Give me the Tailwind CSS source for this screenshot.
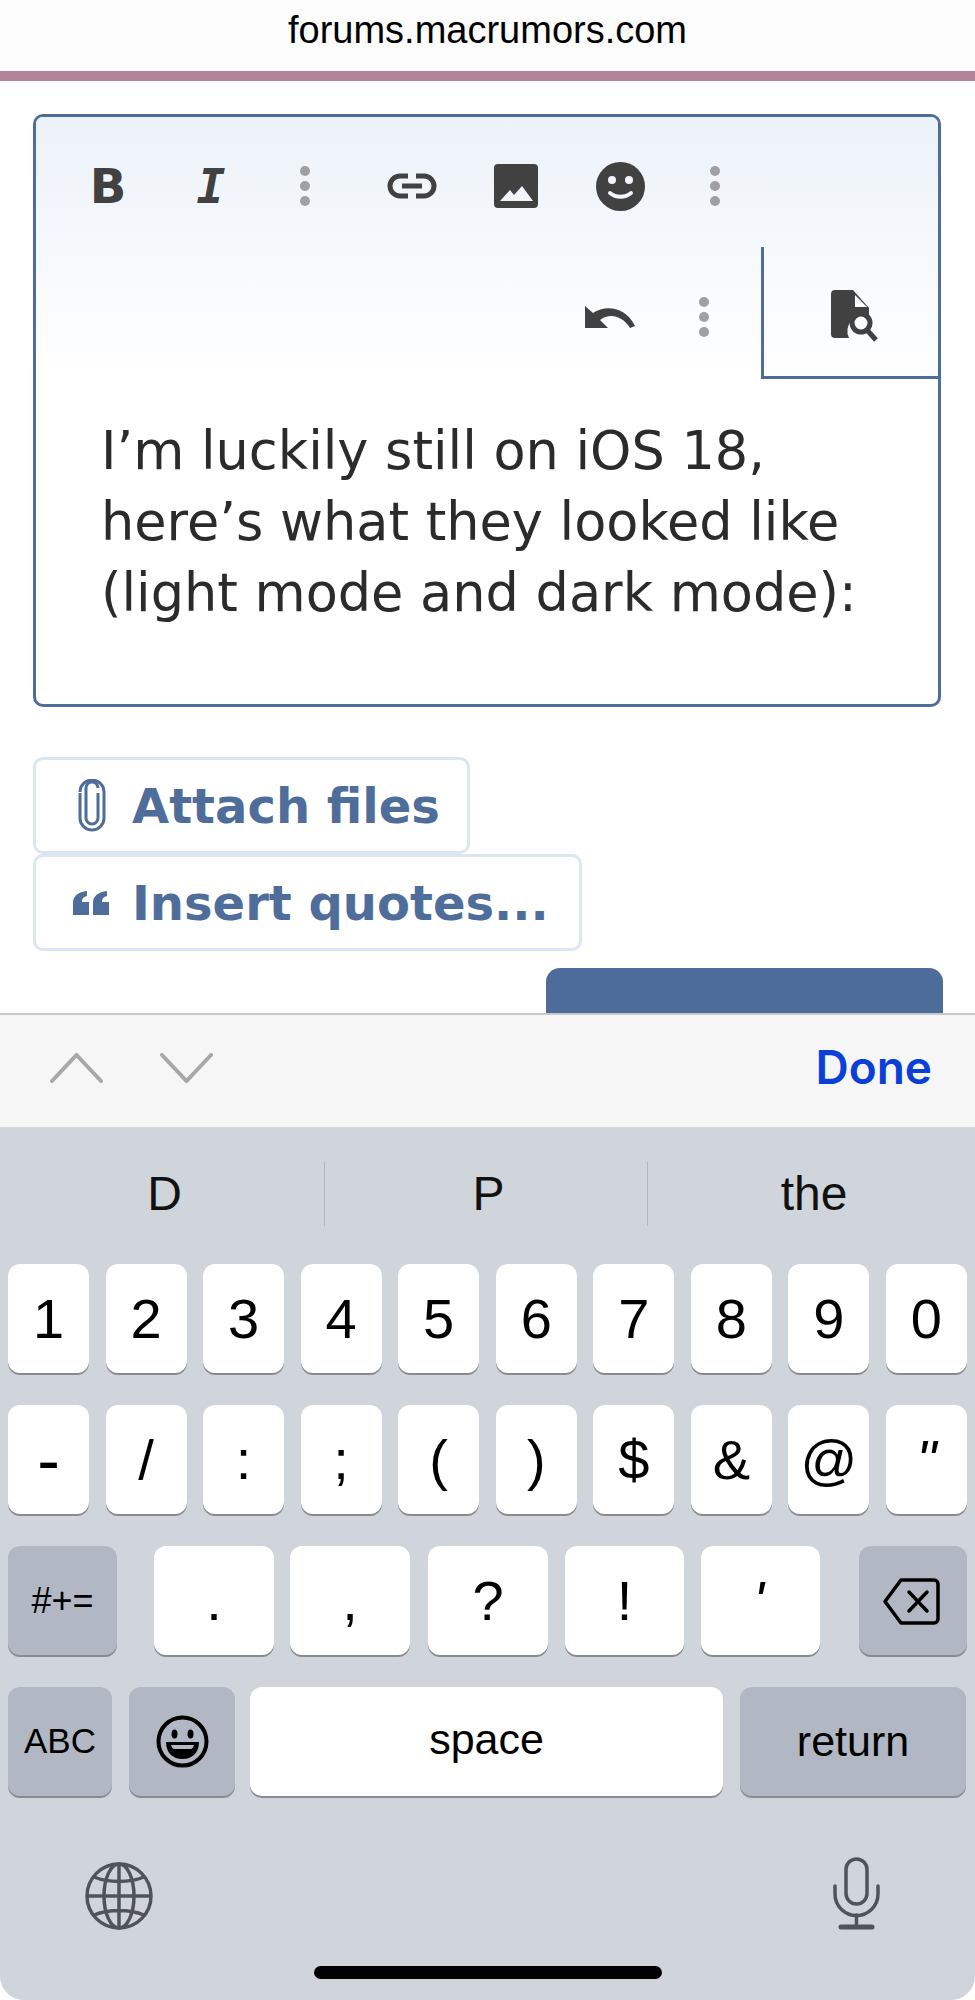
<!DOCTYPE html>
<html lang="en">
<head>
<meta charset="utf-8" />
<title>forums.macrumors.com</title>
<script src="https://cdn.jsdelivr.net/npm/@tailwindcss/browser@4"></script>
</head>
<body class="w-[975px] h-[2000px] overflow-hidden bg-white font-['Liberation_Sans',sans-serif] text-black">

  <!-- safari address bar -->
  <header class="h-[71px] bg-[#fcfcfc] flex items-center justify-center text-[38px] pb-[10px]">forums.macrumors.com</header>
  <div class="h-[10px] bg-[#b38499]"></div>

  <main class="h-[932px] px-[33px] pt-[33px] overflow-hidden flex flex-col items-start">
    <div class="w-[908px] h-[593px] shrink-0 rounded-[10px] border-[3px] border-[#4f6d9a] overflow-hidden">
      <div class="h-[262px] bg-gradient-to-b from-[#ecf2f9] to-[#ffffff]">
        <div class="h-[130px] pt-[8px] pl-[20px] flex items-center text-[#414141]">
          <span class="w-[104px] text-center font-['DejaVu_Sans',sans-serif] font-bold text-[48px] leading-none">B</span>
          <span class="w-[102px] text-center font-['DejaVu_Sans_Mono',monospace] font-bold italic text-[48px] leading-none">I</span>
          <span class="w-[86px] flex flex-col items-center gap-[5px]">
            <i class="size-[10px] rounded-full bg-[#a0a0a3]"></i><i class="size-[10px] rounded-full bg-[#a0a0a3]"></i><i class="size-[10px] rounded-full bg-[#a0a0a3]"></i>
          </span>
          <span class="w-[128px] flex justify-center">
            <svg width="50" height="26" viewBox="0 0 50 26" fill="none" stroke="#414141" stroke-width="5"><path d="M21 3H13a10 10 0 0 0 0 20h8M29 3h8a10 10 0 0 1 0 20h-8"/><path d="M15 13h20" stroke-width="5"/></svg>
          </span>
          <span class="w-[80px] flex justify-center">
            <svg width="44" height="44" viewBox="0 0 44 44"><rect width="44" height="44" rx="4" fill="#414141"/><path d="M6 37l10-11 4 5 8-9 11 15z" fill="#f1f5fb"/></svg>
          </span>
          <span class="w-[128px] flex justify-center">
            <svg width="49" height="49" viewBox="0 0 49 49"><circle cx="24.5" cy="24.5" r="24.5" fill="#414141"/><circle cx="16" cy="18" r="4" fill="#f1f5fb"/><circle cx="33" cy="18" r="4" fill="#f1f5fb"/><path d="M14 31c6 5 15 5 21 0" fill="none" stroke="#f1f5fb" stroke-width="4" stroke-linecap="round"/></svg>
          </span>
          <span class="w-[62px] flex flex-col items-center gap-[5px]">
            <i class="size-[10px] rounded-full bg-[#a0a0a3]"></i><i class="size-[10px] rounded-full bg-[#a0a0a3]"></i><i class="size-[10px] rounded-full bg-[#a0a0a3]"></i>
          </span>
        </div>
        <div class="h-[132px] flex justify-end items-stretch">
          <span class="w-[74px] flex items-center justify-center pt-[8px]">
            <svg width="50" height="22" viewBox="0 0 50 22"><path d="M0 0l8 7C20-1 40 0 50 20l-5 2C37 9 24 7 15 14l8 8H0z" fill="#414141"/></svg>
          </span>
          <span class="w-[114px] flex flex-col items-center justify-center gap-[5px] pt-[8px]">
            <i class="size-[10px] rounded-full bg-[#a0a0a3]"></i><i class="size-[10px] rounded-full bg-[#a0a0a3]"></i><i class="size-[10px] rounded-full bg-[#a0a0a3]"></i>
          </span>
          <div class="w-[177px] border-l-[3px] border-b-[3px] border-[#4f6d9a] flex items-center justify-center pt-[8px] pl-[6px]">
            <svg width="47" height="52" viewBox="0 0 47 52"><path d="M4 0h18l16 18v8a16 16 0 0 0-20 22H4a4 4 0 0 1-4-4V4a4 4 0 0 1 4-4z" fill="#414141"/><path d="M24 5v12h12z" fill="#fbfcfe"/><circle cx="30" cy="33" r="9" fill="none" stroke="#414141" stroke-width="5"/><path d="M36 40l9 10" stroke="#414141" stroke-width="5"/></svg>
          </div>
        </div>
      </div>
      <p class="pt-[36px] pl-[65px] font-['DejaVu_Sans',sans-serif] text-[52.5px] leading-[71px] text-[#2b2b2b] whitespace-nowrap">I’m luckily still on iOS 18,<br>here’s what they looked like<br>(light mode and dark mode):</p>
    </div>

    <button class="mt-[50px] w-[437px] h-[97px] shrink-0 rounded-[10px] border-[3px] border-[#dce6f1] flex items-center pl-[42px] gap-[26px] font-['DejaVu_Sans',sans-serif] font-bold text-[48px] text-[#4f6d9a]">
      <svg class="shrink-0" width="28" height="53" viewBox="0 0 28 53" fill="none" stroke="#4f6d9a" stroke-width="3"><path d="M20 14v25a6 6 0 0 1-12 0V9"/><path d="M8 9a6 6 0 0 1 12 0"/><path d="M2 14v25a12 12 0 0 0 24 0V13a12 12 0 0 0-24 0"/></svg>
      Attach files
    </button>
    <button class="w-[549px] h-[97px] shrink-0 rounded-[10px] border-[3px] border-[#dce6f1] flex items-center pl-[37px] gap-[23px] font-['DejaVu_Sans',sans-serif] font-bold text-[48px] text-[#4f6d9a]">
      <svg class="shrink-0" width="36" height="24" viewBox="0 0 36 24" fill="#4f6d9a"><path d="M0 12C0 5 5 1 14 0v5c-4 1-5 3-5 6h7v13H0zM20 12c0-7 5-11 14-12v5c-4 1-5 3-5 6h7v13H20z"/></svg>
      Insert quotes...
    </button>
    <div class="self-end mr-[-1px] mt-[17px] w-[397px] h-[60px] shrink-0 rounded-t-[14px] bg-[#4e6c9a]"></div>
  </main>

  <!-- keyboard accessory bar -->
  <div class="h-[114px] bg-[#f6f6f6] border-t-2 border-[#c9c9c9] flex items-center pl-[50px] pr-[43px] pb-[7px]">
    <svg width="53" height="30" viewBox="0 0 53 30" fill="none" stroke="#a8a8a8" stroke-width="4" stroke-linecap="round"><path d="M2 28L26.500 2 51 28"/></svg>
    <svg class="ml-[57px]" width="53" height="30" viewBox="0 0 53 30" fill="none" stroke="#a8a8a8" stroke-width="4" stroke-linecap="round"><path d="M2 2L26.500 28 51 2"/></svg>
    <span class="ml-auto font-['Inter',sans-serif] font-semibold text-[46px] text-[#0a3fd8]">Done</span>
  </div>

  <!-- keyboard -->
  <div class="h-[873px] bg-[#d0d4db] rounded-b-[24px] flex flex-col">
    <div class="h-[137px] shrink-0 flex items-center text-[48px] text-[#111] pb-[3px]">
      <span class="w-[324px] text-center pl-[5px]">D</span>
      <span class="w-[324px] h-[64px] flex items-center justify-center border-x border-[#b3b6bc] pl-[5px]">P</span>
      <span class="w-[327px] text-center pl-[5px]">the</span>
    </div>

    <div class="px-[8px] flex flex-col gap-[32px] text-[56px]">
      <div class="h-[109px] flex justify-between">
        <span class="w-[81px] rounded-[12px] bg-white shadow-[0_2px_0_#888b91] flex items-center justify-center">1</span>
        <span class="w-[81px] rounded-[12px] bg-white shadow-[0_2px_0_#888b91] flex items-center justify-center">2</span>
        <span class="w-[81px] rounded-[12px] bg-white shadow-[0_2px_0_#888b91] flex items-center justify-center">3</span>
        <span class="w-[81px] rounded-[12px] bg-white shadow-[0_2px_0_#888b91] flex items-center justify-center">4</span>
        <span class="w-[81px] rounded-[12px] bg-white shadow-[0_2px_0_#888b91] flex items-center justify-center">5</span>
        <span class="w-[81px] rounded-[12px] bg-white shadow-[0_2px_0_#888b91] flex items-center justify-center">6</span>
        <span class="w-[81px] rounded-[12px] bg-white shadow-[0_2px_0_#888b91] flex items-center justify-center">7</span>
        <span class="w-[81px] rounded-[12px] bg-white shadow-[0_2px_0_#888b91] flex items-center justify-center">8</span>
        <span class="w-[81px] rounded-[12px] bg-white shadow-[0_2px_0_#888b91] flex items-center justify-center">9</span>
        <span class="w-[81px] rounded-[12px] bg-white shadow-[0_2px_0_#888b91] flex items-center justify-center">0</span>
      </div>
      <div class="h-[109px] flex justify-between">
        <span class="w-[81px] rounded-[12px] bg-white shadow-[0_2px_0_#888b91] flex items-center justify-center text-[68px]">-</span>
        <span class="w-[81px] rounded-[12px] bg-white shadow-[0_2px_0_#888b91] flex items-center justify-center">/</span>
        <span class="w-[81px] rounded-[12px] bg-white shadow-[0_2px_0_#888b91] flex items-center justify-center">:</span>
        <span class="w-[81px] rounded-[12px] bg-white shadow-[0_2px_0_#888b91] flex items-center justify-center">;</span>
        <span class="w-[81px] rounded-[12px] bg-white shadow-[0_2px_0_#888b91] flex items-center justify-center">(</span>
        <span class="w-[81px] rounded-[12px] bg-white shadow-[0_2px_0_#888b91] flex items-center justify-center">)</span>
        <span class="w-[81px] rounded-[12px] bg-white shadow-[0_2px_0_#888b91] flex items-center justify-center">$</span>
        <span class="w-[81px] rounded-[12px] bg-white shadow-[0_2px_0_#888b91] flex items-center justify-center">&amp;</span>
        <span class="w-[81px] rounded-[12px] bg-white shadow-[0_2px_0_#888b91] flex items-center justify-center">@</span>
        <span class="w-[81px] rounded-[12px] bg-white shadow-[0_2px_0_#888b91] flex items-center justify-center italic">"</span>
      </div>
      <div class="h-[109px] flex">
        <span class="w-[109px] rounded-[12px] bg-[#b1b8c4] shadow-[0_2px_0_#888b91] flex items-center justify-center text-[36px]">#+=</span>
        <span class="ml-[37px] w-[120px] rounded-[12px] bg-white shadow-[0_2px_0_#888b91] flex items-center justify-center">.</span>
        <span class="ml-[16px] w-[120px] rounded-[12px] bg-white shadow-[0_2px_0_#888b91] flex items-center justify-center">,</span>
        <span class="ml-[18px] w-[120px] rounded-[12px] bg-white shadow-[0_2px_0_#888b91] flex items-center justify-center">?</span>
        <span class="ml-[17px] w-[119px] rounded-[12px] bg-white shadow-[0_2px_0_#888b91] flex items-center justify-center">!</span>
        <span class="ml-[17px] w-[119px] rounded-[12px] bg-white shadow-[0_2px_0_#888b91] flex items-center justify-center italic pr-[4px]">'</span>
        <span class="ml-[39px] w-[108px] rounded-[12px] bg-[#b1b8c4] shadow-[0_2px_0_#888b91] flex items-center justify-center pr-[3px] pt-[1px]">
          <svg width="57" height="47" viewBox="0 0 57 47" fill="none" stroke="#000" stroke-width="3.500" stroke-linejoin="round" stroke-linecap="round"><path d="M18 2h33a4 4 0 0 1 4 4v35a4 4 0 0 1-4 4H18L2 23.500z"/><path d="M26 14l18 19M44 14L26 33"/></svg>
        </span>
      </div>
      <div class="h-[109px] flex text-[43px]">
        <span class="w-[104px] rounded-[12px] bg-[#b1b8c4] shadow-[0_2px_0_#888b91] flex items-center justify-center text-[35px]">ABC</span>
        <span class="ml-[17px] w-[106px] rounded-[12px] bg-[#b1b8c4] shadow-[0_2px_0_#888b91] flex items-center justify-center">
          <svg width="53" height="53" viewBox="0 0 53 53" fill="none" stroke="#000" stroke-width="4"><circle cx="26.500" cy="26.500" r="24"/><ellipse cx="18.500" cy="19" rx="3" ry="4.500" fill="#000" stroke="none"/><ellipse cx="34.500" cy="19" rx="3" ry="4.500" fill="#000" stroke="none"/><path d="M10 27h33c0 11-7 17-16.500 17S10 38 10 27z" fill="#000" stroke="none"/><path d="M15 30h23c-1 3-2 4-3 4H18c-1 0-2-1-3-4z" fill="#b1b8c4" stroke="none"/></svg>
        </span>
        <span class="ml-[15px] w-[473px] rounded-[12px] bg-white shadow-[0_2px_0_#888b91] flex items-center justify-center pb-[4px]">space</span>
        <span class="ml-[17px] w-[226px] rounded-[12px] bg-[#b1b8c4] shadow-[0_2px_0_#888b91] flex items-center justify-center">return</span>
      </div>
    </div>

    <div class="mt-[61px] h-[73px] flex items-end pl-[85px]">
      <svg width="68" height="68" viewBox="0 0 68 68" fill="none" stroke="#50535b" stroke-width="3.500"><circle cx="34" cy="34" r="32"/><ellipse cx="34" cy="34" rx="15" ry="32"/><path d="M34 2v64M2 34h64M9 15c15 6 35 6 50 0M9 53c15-6 35-6 50 0"/></svg>
      <svg class="ml-[680px]" width="47" height="73" viewBox="0 0 47 73" fill="none" stroke="#50535b" stroke-width="3.500" stroke-linecap="round"><rect x="13" y="2" width="21" height="45" rx="10.500"/><path d="M2 29v8a21.500 21.500 0 0 0 43 0v-8"/><path d="M23.500 58v12" /><path d="M8 70h31" stroke-width="5"/></svg>
    </div>
    <div class="mt-[36px] mx-auto w-[348px] h-[13px] rounded-full bg-black"></div>
  </div>
</body>
</html>
